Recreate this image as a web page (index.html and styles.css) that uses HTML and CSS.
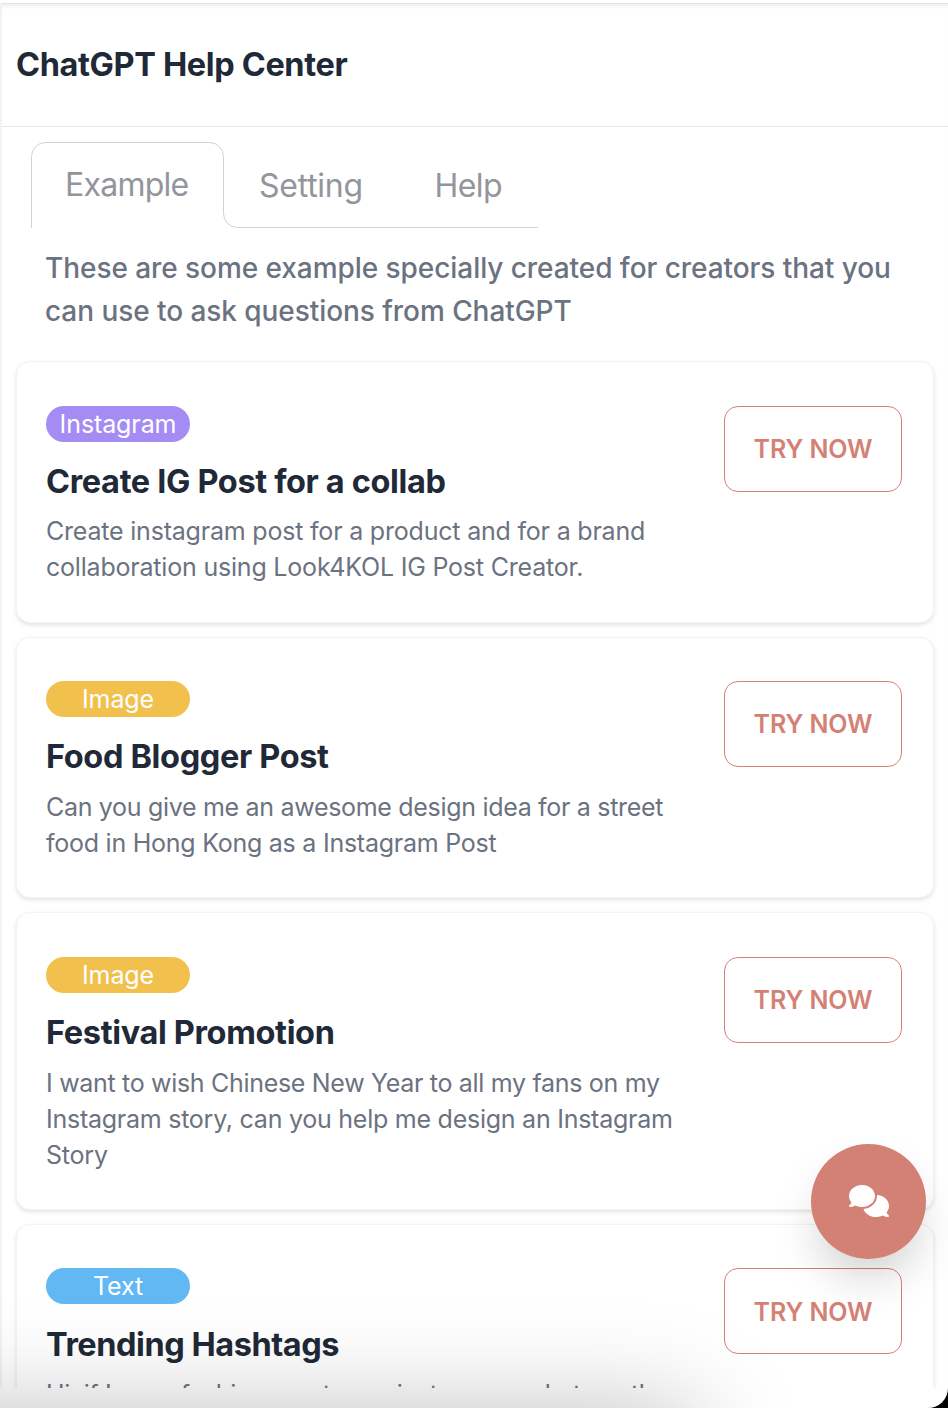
FILE: index.html
```html
<!DOCTYPE html>
<html lang="en">
<head>
<meta charset="utf-8">
<title>ChatGPT Help Center</title>
<link rel="stylesheet" href="styles.css">
</head>
<body>
<div class="window">
  <main class="panel">
    <header class="header"><h1 class="title"><span>ChatGPT Help Center</span></h1></header>
    <nav class="tabs">
      <svg class="tabs-frame" width="507" height="86" viewBox="0 0 507 86" fill="none" stroke="#d1d2d9"><path d="M.5 86V14.5a14 14 0 0 1 14-14H178.5a14 14 0 0 1 14 14V71.5a14 14 0 0 0 14 14H507"/></svg>
      <a class="tab tab-active"><span>Example</span></a>
      <a class="tab tab-setting"><span>Setting</span></a>
      <a class="tab tab-help"><span>Help</span></a>
    </nav>
    <p class="intro"><span>These are some example specially created for creators that you</span><br><span>can use to ask questions from ChatGPT</span></p>
    <section class="cards">
      <article class="card">
        <div class="info">
          <span class="badge badge-instagram">Instagram</span>
          <h2 class="name"><span>Create IG Post for a collab</span></h2>
          <p class="text text-wide"><span>Create instagram post for a product and for a brand</span><br><span>collaboration using Look4KOL IG Post Creator.</span></p>
        </div>
        <button class="try"><span>TRY NOW</span></button>
      </article>
      <article class="card">
        <div class="info">
          <span class="badge badge-image">Image</span>
          <h2 class="name"><span>Food Blogger Post</span></h2>
          <p class="text"><span>Can you give me an awesome design idea for a street</span><br><span class="text-mid">food in Hong Kong as a Instagram Post</span></p>
        </div>
        <button class="try"><span>TRY NOW</span></button>
      </article>
      <article class="card card-tall">
        <div class="info">
          <span class="badge badge-image">Image</span>
          <h2 class="name"><span>Festival Promotion</span></h2>
          <p class="text"><span>I want to wish Chinese New Year to all my fans on my</span><br><span class="text-mid">Instagram story, can you help me design an Instagram</span><br><span class="text-wide">Story</span></p>
        </div>
        <button class="try"><span>TRY NOW</span></button>
      </article>
      <article class="card card-tall">
        <div class="info">
          <span class="badge badge-text">Text</span>
          <h2 class="name name-tight"><span>Trending Hashtags</span></h2>
          <p class="text"><span>Hi, if I am a fashion creator on instagram, what are the</span></p>
        </div>
        <button class="try"><span>TRY NOW</span></button>
      </article>
    </section>
  </main>
  <div class="bottom-shade"></div>
  <button class="chat" aria-label="Chat">
    <svg width="40" height="32" viewBox="0 0 640 512" fill="#fff"><path d="M208 352c114.9 0 208-78.8 208-176S322.9 0 208 0S0 78.8 0 176c0 38.6 14.7 74.3 39.6 103.4c-3.5 9.4-8.7 17.7-14.2 24.7c-4.8 6.2-9.7 11-13.3 14.3c-1.8 1.6-3.3 2.9-4.3 3.7c-.5 .4-.9 .7-1.1 .8l-.2 .2C1 327.2-1.4 334.4 .8 340.9S9.1 352 16 352c21.8 0 43.8-5.6 62.1-12.5c9.2-3.5 17.8-7.4 25.2-11.4C134.1 343.3 169.8 352 208 352zM448 176c0 112.3-99.1 196.9-216.5 207C255.8 457.4 336.4 512 432 512c38.2 0 73.9-8.7 104.7-23.9c7.5 4 16 7.9 25.2 11.4c18.3 6.9 40.3 12.5 62.1 12.5c6.9 0 13.1-4.5 15.2-11.1c2.1-6.6-.2-13.8-5.8-17.9l-.2-.2c-.2-.2-.6-.4-1.1-.8c-1-.8-2.5-2-4.3-3.7c-3.6-3.3-8.5-8.1-13.3-14.3c-5.5-7-10.7-15.4-14.2-24.7c24.9-29 39.6-64.7 39.6-103.4c0-92.8-84.9-168.9-192.6-175.5c.4 5.1 .6 10.3 .6 15.5z"/></svg>
  </button>
</div>
</body>
</html>
```
FILE: styles.css
```css
* { box-sizing: border-box; }
html { background: #000; }
body { margin: 0; font-family: Inter, "Liberation Sans", sans-serif; }
h1, h2, p { margin: 0; }
button { font: inherit; padding: 0; }
.window { position: relative; width: 948px; height: 1408px; overflow: hidden; background: #fff; border-bottom-right-radius: 20px; padding-top: 3px; }
.panel { height: 1385px; overflow: hidden; border-left: 2px solid #f3f3f4; background: #fff; box-shadow: inset 0 1px 0 #e2e2e2, inset 0 6px 6px -5px rgba(0,0,0,.12); white-space: nowrap; }
.header { height: 124px; display: flex; align-items: center; padding-left: 14px; border-bottom: 1px solid #e5e6e9; }
.title { font-size: 32.5px; font-weight: 700; letter-spacing: -.37px; color: #1f2937; line-height: 44px; }
.tabs { position: relative; display: flex; width: 507px; height: 86px; margin: 15px 0 0 29px; color: #92959c; font-size: 32px; line-height: 84px; }
.tabs-frame { position: absolute; left: 0; top: 0; }
.tab-active { padding: 1px 0 0 34px; width: 193px; letter-spacing: -.75px; }
.tab-setting { padding: 2px 0 0 35px; width: 175px; letter-spacing: -.25px; }
.tab-help { padding: 2px 0 0 35.5px; letter-spacing: -.6px; }
.intro { padding: 19px 0 0 43px; font-size: 28px; line-height: 43px; font-weight: 500; letter-spacing: -.06px; color: #6b7280; }
.cards { display: flex; flex-direction: column; gap: 14.1px; padding: 28px 14px 0; }
.card { display: flex; justify-content: space-between; flex: none; height: 261.5px; padding: 43.6px 31px 0 29px; border: 1px solid #f3f4f6; border-radius: 14px; background: #fff; box-shadow: 0 2px 4px rgba(0,0,0,.11); }
.card-tall { height: 297.5px; }
.badge { display: block; width: 144px; height: 36px; border-radius: 18px; color: #fff; text-align: center; font-size: 25px; line-height: 36px; letter-spacing: -.1px; }
.badge-instagram { background: #a58cf5; }
.badge-image { background: #f2c14d; }
.badge-text { background: #61b8f3; }
.name { margin-top: 18px; font-size: 32.5px; line-height: 44px; font-weight: 700; letter-spacing: -.35px; color: #1f2937; }
.name-tight { margin: 18.4px 0 -.8px; letter-spacing: -.46px; }
.text { margin-top: 9.8px; font-size: 25px; line-height: 36px; letter-spacing: -.31px; color: #6b7280; }
.text-wide { letter-spacing: -.2px; }
.text-mid { letter-spacing: -.25px; }
.try { width: 178px; height: 86px; padding-top: .4px; border: 1px solid #d48175; border-radius: 14px; background: transparent; color: #d48175; font-size: 25px; font-weight: 600; letter-spacing: -.1px; }
.chat { position: absolute; left: 811px; top: 1144px; width: 115px; height: 115px; padding-bottom: 1px; border: 0; border-radius: 50%; background: #d48175; display: grid; place-items: center; box-shadow: 0 25px 50px -12px rgba(0,0,0,.23); }
.bottom-shade { position: absolute; left: -200px; top: 1410px; width: 895px; height: 300px; box-shadow: 0 0 96px rgba(0,0,0,.25); }
```
